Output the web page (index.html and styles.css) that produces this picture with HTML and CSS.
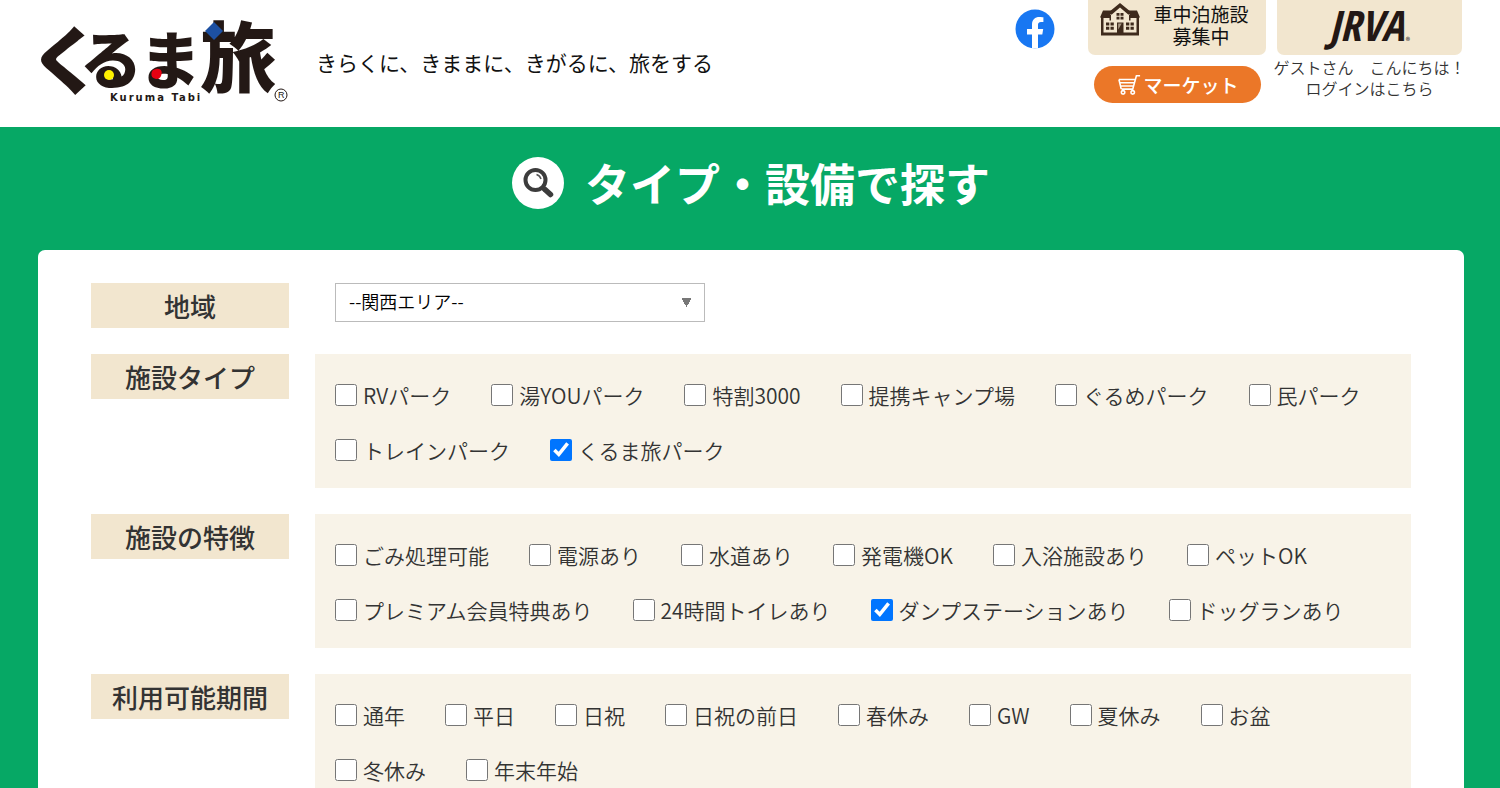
FILE: index.html
```html
<!DOCTYPE html>
<html lang="ja">
<head>
<meta charset="utf-8">
<meta name="viewport" content="width=device-width, initial-scale=1">
<title>タイプ・設備で探す | くるま旅</title>
<link rel="stylesheet" href="styles.css">
</head>
<body>
<header class="header">
  <a class="logo" href="#">
    <svg width="250" height="88" viewBox="0 0 250 88" role="img" aria-label="くるま旅 Kuruma Tabi">
      <g class="logo-kana">
        <text x="-11" y="66" font-size="74">く</text>
        <text x="40" y="62" font-size="62">る</text>
        <text x="99" y="62" font-size="62">ま</text>
        <text x="160" y="64" font-size="76">旅</text>
      </g>
      <path d="M174 0l9 9-9 9-9-9z" fill="#1d50a2"/>
      <circle cx="69" cy="53" r="5" fill="#fff100"/>
      <path d="M116 47c5-1 7 3 5 7a5 5 0 1 1-5-7z" fill="#e60012"/>
      <text class="logo-roman" x="70" y="79" font-size="10">Kuruma Tabi</text>
      <circle cx="241" cy="73" r="6" fill="none" stroke="#231815"/>
      <text x="238" y="76" font-size="9" class="logo-mark">R</text>
    </svg>
  </a>
  <p class="tagline">きらくに、きままに、きがるに、旅をする</p>
  <a class="facebook" href="#" aria-label="Facebook">
    <svg width="40" height="40" viewBox="0 0 40 40">
      <circle cx="20" cy="20" r="19.500" fill="#1877f2"/>
      <path d="M17 39.400V25.500h-5V20h5v-4.500c0-5 3-7.600 7.400-7.600 2.100 0 4 .3 4 .3v4.700H26c-2.300 0-3 1.400-3 2.900V20h5.200l-.9 5.500H23v13.900z" fill="#fff"/>
    </svg>
  </a>
  <div class="column column-recruit">
    <a class="tile" href="#">
      <svg width="40" height="34" viewBox="0 0 40 34" fill="#3e2a1c">
        <path d="M1 14h38v18.500H1z"/>
        <path d="M3.500 15h33v14.500h-33z" fill="#f2e6cf"/>
        <path d="M3 7.500h10v7H0z M37 7.500H27v7h13z"/>
        <path d="M20 3.500l10 8.500v5.500H10V12z" fill="#f2e6cf"/>
        <path d="M20 0l11 9-2.500 2.800L20 4.600l-8.500 7.200L9 9z"/>
        <path d="M9.500 12h1.500v5.500H9.500zM29 12h1.500v5.500H29z"/>
        <path d="M16.500 10h3v2.700h-3zM20.500 10h3v2.700h-3zM16.500 13.700h3v2.800h-3zM20.500 13.700h3v2.800h-3z"/>
        <path d="M6 19.500h3.300v3H6zM10.500 19.500h3.300v3h-3.300zM6 23.700h3.300v3H6zM10.500 23.700h3.300v3h-3.300zM26 19.500h3.300v3H26zM30.500 19.500h3.300v3h-3.300zM26 23.700h3.300v3H26zM30.500 23.700h3.300v3h-3.300z"/>
        <path d="M17 19.500h6.500v11H17z"/>
        <path d="M18.200 20.500h3.500l-3.500 6z" fill="#f2e6cf" fill-opacity=".6"/>
      </svg>
      <span class="tile-text">車中泊施設<br>募集中</span>
    </a>
    <a class="market" href="#">
      <svg width="23" height="22" viewBox="0 0 25 22" fill="none" stroke="#fff" stroke-width="1.700">
        <path d="M24 1h-4l-4 14.500H4M1 5h17.500M1 5l2.500 10.500M2 8.500h15.500M3 12h14"/>
        <circle cx="5.500" cy="19" r="1.900"/><circle cx="16" cy="19" r="1.900"/>
      </svg>
      <span>マーケット</span>
    </a>
  </div>
  <div class="column column-member">
    <a class="tile" href="#"><span class="jrva">JRVA</span><small class="reg">®</small></a>
    <p class="guest">ゲストさん　こんにちは！<br><a href="#">ログインはこちら</a></p>
  </div>
</header>

<main class="main">
  <h1 class="title">
    <svg width="52" height="52" viewBox="0 0 52 52" aria-hidden="true">
      <circle cx="26" cy="26" r="26" fill="#fff"/>
      <circle cx="23.500" cy="23" r="10" fill="none" stroke="#3c3c3c" stroke-width="4"/>
      <path d="M30.500 30.500l3 3" stroke="#3c3c3c" stroke-width="4"/>
      <path d="M33 32.500l5.500 5" stroke="#3c3c3c" stroke-width="5.500" stroke-linecap="round"/>
      <path d="M24.500 17.500q3.500 1 4.500 4.500" fill="none" stroke="#555" stroke-width="1.500"/>
    </svg>
    <span>タイプ・設備で探す</span>
  </h1>
  <form class="card">
    <div class="row">
      <label class="row-label" for="area">地域</label>
      <div class="field">
        <select class="select" id="area"><option>--関西エリア--</option></select>
      </div>
    </div>
    <div class="row" role="group" aria-labelledby="l-type">
      <div class="row-label" id="l-type">施設タイプ</div>
      <div class="panel">
        <label class="option"><input type="checkbox">RVパーク</label>
        <label class="option"><input type="checkbox">湯YOUパーク</label>
        <label class="option"><input type="checkbox">特割3000</label>
        <label class="option"><input type="checkbox">提携キャンプ場</label>
        <label class="option"><input type="checkbox">ぐるめパーク</label>
        <label class="option"><input type="checkbox">民パーク</label>
        <label class="option"><input type="checkbox">トレインパーク</label>
        <label class="option"><input type="checkbox" checked>くるま旅パーク</label>
      </div>
    </div>
    <div class="row" role="group" aria-labelledby="l-feature">
      <div class="row-label" id="l-feature">施設の特徴</div>
      <div class="panel">
        <label class="option"><input type="checkbox">ごみ処理可能</label>
        <label class="option"><input type="checkbox">電源あり</label>
        <label class="option"><input type="checkbox">水道あり</label>
        <label class="option"><input type="checkbox">発電機OK</label>
        <label class="option"><input type="checkbox">入浴施設あり</label>
        <label class="option"><input type="checkbox">ペットOK</label>
        <label class="option"><input type="checkbox">プレミアム会員特典あり</label>
        <label class="option"><input type="checkbox">24時間トイレあり</label>
        <label class="option"><input type="checkbox" checked>ダンプステーションあり</label>
        <label class="option"><input type="checkbox">ドッグランあり</label>
      </div>
    </div>
    <div class="row" role="group" aria-labelledby="l-period">
      <div class="row-label" id="l-period">利用可能期間</div>
      <div class="panel">
        <label class="option"><input type="checkbox">通年</label>
        <label class="option"><input type="checkbox">平日</label>
        <label class="option"><input type="checkbox">日祝</label>
        <label class="option"><input type="checkbox">日祝の前日</label>
        <label class="option"><input type="checkbox">春休み</label>
        <label class="option"><input type="checkbox">GW</label>
        <label class="option"><input type="checkbox">夏休み</label>
        <label class="option"><input type="checkbox">お盆</label>
        <label class="option"><input type="checkbox">冬休み</label>
        <label class="option"><input type="checkbox">年末年始</label>
      </div>
    </div>
  </form>
</main>
</body>
</html>
```

FILE: styles.css
```css
* { box-sizing: border-box; }

html { scrollbar-width: none; }

body {
  margin: 0;
  background: #fff;
  color: #333;
  font-family: "Noto Sans CJK JP", sans-serif;
  font-size: 21px;
}

a { color: inherit; text-decoration: none; }
p { margin: 0; }
svg { display: block; flex: none; }

.header {
  display: flex;
  align-items: flex-start;
  height: 127px;
  padding: 0 38px 0 40px;
}

.logo { padding-top: 22px; }
.logo svg { overflow: visible; }
.logo-kana { fill: #231815; font-weight: 900; }
.logo-roman { fill: #231815; font-family: "DejaVu Sans", sans-serif; font-weight: 700; letter-spacing: 2px; }
.logo-mark { fill: #231815; font-family: "Liberation Sans", sans-serif; }

.tagline {
  margin-left: 26px;
  padding-top: 47px;
  color: #111;
  line-height: 30px;
  white-space: nowrap;
}

.facebook { margin-left: auto; padding-top: 9px; }

.column { display: flex; flex-direction: column; align-items: center; }
.column-recruit { width: 178px; margin-left: 33px; }
.column-member { width: 185px; margin-left: 11px; }

.tile {
  display: flex;
  align-items: flex-start;
  justify-content: center;
  gap: 13px;
  width: 100%;
  height: 55px;
  padding-top: 3px;
  padding-right: 5px;
  border-radius: 0 0 7px 7px;
  background: #f2e6cf;
  color: #111;
}
.tile-text { font-size: 19px; line-height: 22px; text-align: center; }

.column-member .tile { align-items: flex-end; gap: 2px; padding: 0 0 9px; }
.jrva {
  color: #231815;
  font-family: "Liberation Sans Narrow", "Open Sans Condensed", "Liberation Sans", sans-serif;
  font-size: 42px;
  font-style: italic;
  font-weight: 700;
  line-height: 42px;
}
.reg { font-size: 9px; line-height: 10px; }

.market {
  display: flex;
  align-items: center;
  justify-content: center;
  gap: 2px;
  width: 167px;
  height: 37px;
  margin-top: 11px;
  padding-left: 3px;
  border-radius: 19px;
  background: #eb7728;
  color: #fff;
  font-size: 19px;
  font-weight: 500;
  line-height: 36px;
}

.guest { padding-top: 2px; font-size: 16px; font-weight: 350; line-height: 21px; text-align: center; white-space: nowrap; }

.main { padding: 28px 36px 60px 38px; background: #06a865; }

.title {
  display: flex;
  align-items: center;
  justify-content: center;
  gap: 21px;
  margin: 0 0 40px;
  color: #fff;
  font-size: 45px;
  font-weight: 700;
  line-height: 55px;
}

.card {
  display: flex;
  flex-direction: column;
  gap: 26px;
  padding: 33px 53px;
  border-radius: 7px;
  background: #fff;
}

.row { display: flex; align-items: flex-start; gap: 26px; }

.row-label {
  flex: none;
  width: 198px;
  background: #f2e6cf;
  font-size: 26px;
  font-weight: 500;
  line-height: 45px;
  text-align: center;
}

.field { flex: 1; padding-left: 20px; }

.select {
  display: block;
  width: 370px;
  height: 39px;
  padding: 0 13px 4px;
  border: 1px solid #bbb;
  border-radius: 0;
  appearance: none;
  background: #fff conic-gradient(from -30deg at 50% 100%, #777 60deg, transparent 0) no-repeat right 12px top 14px / 11px 9px;
  color: #000;
  font-family: "Noto Sans CJK JP", sans-serif;
  font-size: 18px;
  font-weight: 350;
}

.panel {
  display: flex;
  flex: 1;
  flex-wrap: wrap;
  column-gap: 40px;
  padding: 13px 20px 11px;
  background: #f8f3e8;
}

.option {
  display: flex;
  align-items: center;
  gap: 6px;
  height: 55px;
  font-weight: 350;
  white-space: nowrap;
}
.option input { width: 22px; height: 22px; margin: 0; accent-color: #0075ff; }
```
